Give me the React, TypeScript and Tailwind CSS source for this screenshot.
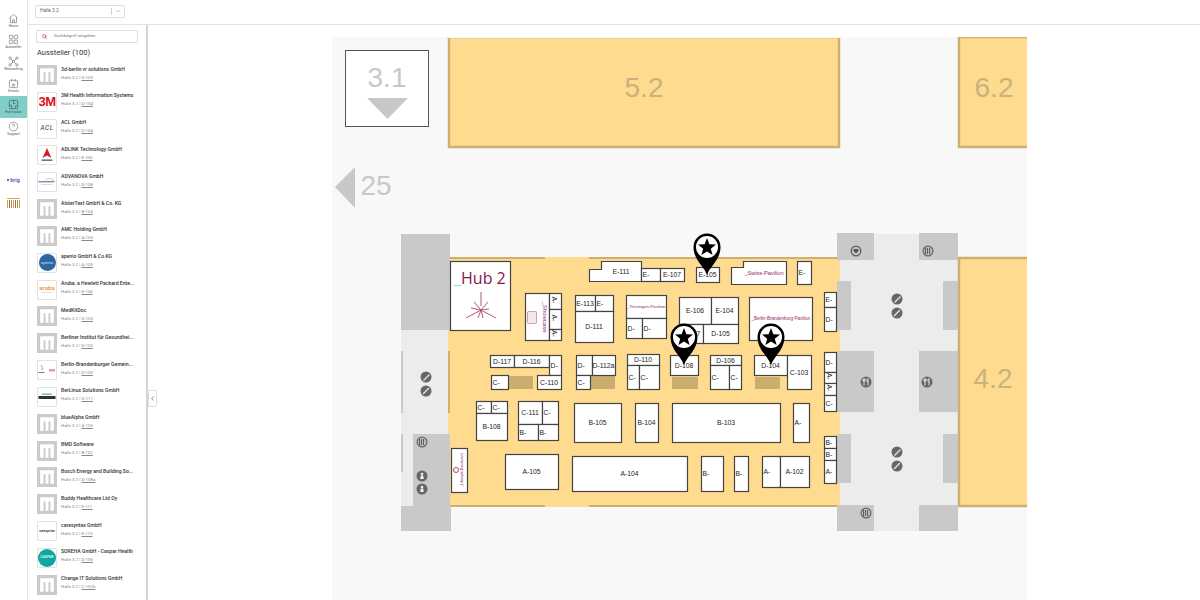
import { ChevronDown, ChevronLeft, Search } from "lucide-react";

const FONT = "font-['Roboto',sans-serif]";

type Exhibitor = { name: string; booth: string; logo?: string };

const exhibitors: Exhibitor[] = [
  { name: "3d-berlin vr solutions GmbH", booth: "D-103" },
  { name: "3M Health Information Systems", booth: "D-104", logo: "3m" },
  { name: "ACL GmbH", booth: "D-104", logo: "acl" },
  { name: "ADLINK Technology GmbH", booth: "E-105", logo: "adlink" },
  { name: "ADVANOVA GmbH", booth: "D-108", logo: "advanova" },
  { name: "AlsterText GmbH & Co. KG", booth: "B-104" },
  { name: "AMC Holding GmbH", booth: "A-105" },
  { name: "apenio GmbH & Co.KG", booth: "A-105", logo: "apenio" },
  { name: "Aruba, a Hewlett Packard Ente...", booth: "E-104", logo: "aruba" },
  { name: "MedKitDoc", booth: "D-103" },
  { name: "Berliner Institut für Gesundhei...", booth: "D-103" },
  { name: "Berlin-Brandenburger Gemein...", booth: "D-103", logo: "bb" },
  { name: "BerLinux Solutions GmbH", booth: "D-111", logo: "berlinux" },
  { name: "blueAlpha GmbH", booth: "A-105" },
  { name: "BMD Software", booth: "B-102" },
  { name: "Bosch Energy and Building So...", booth: "D-108a" },
  { name: "Buddy Healthcare Ltd Oy", booth: "E-111" },
  { name: "caresyntax GmbH", booth: "E-113", logo: "caresyntax" },
  { name: "SOREHA GmbH - Caspar Health", booth: "D-106", logo: "caspar" },
  { name: "Change IT Solutions GmbH", booth: "C-102b" },
];

const Logo = ({ kind }: { kind?: string }) => {
  if (!kind) {
    return (
      <div className="w-[20px] h-[20px] bg-[#cbcbcb] shrink-0 flex items-center justify-center">
        <svg width="16" height="16" viewBox="0 0 14 14">
          <path d="M1 13V1h12v12h-3V4.500H8.300V13H5.700V4.500H4V13z" fill="#fff" />
        </svg>
      </div>
    );
  }
  return (
    <div className="w-[20px] h-[20px] bg-white border border-[#e2e2e2] rounded-[1px] shrink-0 flex items-center justify-center overflow-hidden">
      {kind === "3m" && <span className="text-[#e01010] text-[13px] font-black font-['Liberation_Sans',sans-serif] tracking-[-0.5px]">3M</span>}
      {kind === "acl" && <span className="text-[#333] text-[6.500px] italic tracking-[0.5px]">ACL</span>}
      {kind === "adlink" && (
        <svg width="14" height="16" viewBox="0 0 14 16">
          <path d="M7 1l4.500 10-4.500-2.500L2.500 11z" fill="#d32027" />
          <rect x="1.500" y="12.500" width="11" height="1.300" fill="#555" />
        </svg>
      )}
      {kind === "advanova" && (
        <svg width="18" height="10" viewBox="0 0 18 10">
          <path d="M7 3c3-2.500 7-2 9 1" fill="none" stroke="#f0a860" strokeWidth="0.700" />
          <rect x="0.500" y="4" width="16" height="1.400" fill="#6f8fc0" />
          <rect x="3" y="7" width="11" height="0.700" fill="#ccc" />
        </svg>
      )}
      {kind === "apenio" && (
        <div className="w-[17px] h-[17px] rounded-full bg-[#2b68a0] flex items-center justify-center text-[#cfe0f0] text-[4px]">apenio</div>
      )}
      {kind === "aruba" && (
        <div className="flex flex-col items-center leading-none">
          <span className="text-[#f08a1d] text-[6px] font-medium">aruba</span>
          <span className="text-[#bbb] text-[2.500px] mt-[1px]">enterprise</span>
        </div>
      )}
      {kind === "bb" && (
        <svg width="18" height="12" viewBox="0 0 18 12">
          <path d="M3 1l2 4-2 1" fill="none" stroke="#c64a5a" strokeWidth="0.600" />
          <rect x="0.500" y="8" width="6" height="1" fill="#777" />
          <rect x="11" y="5" width="6" height="2.500" fill="#d8a0a8" />
        </svg>
      )}
      {kind === "berlinux" && (
        <svg width="18" height="8" viewBox="0 0 18 8">
          <rect x="4" y="0.500" width="10" height="1.400" fill="#6fb5b5" />
          <rect x="0.500" y="3" width="17" height="3" fill="#333" />
        </svg>
      )}
      {kind === "caresyntax" && <span className="text-[#222] text-[3.200px] font-medium">caresyntax</span>}
      {kind === "caspar" && (
        <div className="w-[18px] h-[18px] rounded-full bg-[#0ea8a0] flex items-center justify-center text-white text-[3.400px] font-medium">CASPAR</div>
      )}
    </div>
  );
};

const iconProps = { width: 11, height: 11, viewBox: "0 0 24 24", fill: "none", stroke: "#777", strokeWidth: 1.500 };

const navItems = [
  {
    label: "Home",
    icon: (
      <svg {...iconProps}>
        <path d="M3 11l9-8 9 8M5.500 9v12h13V9M10 21v-6h4v6" />
      </svg>
    ),
  },
  {
    label: "Aussteller",
    icon: (
      <svg {...iconProps}>
        <rect x="3" y="3" width="7.500" height="7.500" rx="1.500" />
        <rect x="13.500" y="3" width="7.500" height="7.500" rx="1.500" />
        <rect x="3" y="13.500" width="7.500" height="7.500" rx="1.500" />
        <rect x="13.500" y="13.500" width="7.500" height="7.500" rx="1.500" />
      </svg>
    ),
  },
  {
    label: "Networking",
    icon: (
      <svg {...iconProps}>
        <circle cx="4.500" cy="4.500" r="2.500" />
        <circle cx="19.500" cy="4.500" r="2.500" />
        <circle cx="4.500" cy="19.500" r="2.500" />
        <circle cx="19.500" cy="19.500" r="2.500" />
        <path d="M6.500 6.500l3 3M17.500 6.500l-3 3M6.500 17.500l3-3M17.500 17.500l-3-3" />
        <rect x="9.500" y="9.500" width="5" height="5" />
      </svg>
    ),
  },
  {
    label: "Events",
    icon: (
      <svg {...iconProps}>
        <rect x="3" y="5" width="18" height="16" rx="2" />
        <path d="M8 2.500v5M16 2.500v5M3 10h2M19 10h2M12 12l1 2 2 .3-1.500 1.500.4 2.200-1.900-1-1.900 1 .4-2.200L9 14.300l2-.3z" />
      </svg>
    ),
  },
  {
    label: "Hallenplan",
    active: true,
    icon: (
      <svg {...iconProps} stroke="#3f5f60">
        <rect x="3" y="3" width="18" height="18" rx="2" />
        <path d="M3 14h5v7M12 3v7h4M16 21v-6h5" />
      </svg>
    ),
  },
  {
    label: "Support",
    icon: (
      <svg {...iconProps}>
        <circle cx="12" cy="12" r="9.500" />
        <path d="M9.500 9.500a2.500 2.500 0 1 1 3.500 2.300c-.7.3-1 .8-1 1.700M12 16.500v.5" />
      </svg>
    ),
  },
];

const stripes = ["#e0a030", "#d06040", "#6aa0a0", "#e0a030", "#d06040", "#88a050", "#e0a030"];

const Sidebar = () => (
  <nav className="w-[28px] shrink-0 flex flex-col items-center border-r border-[#e4e4e4] pt-[10px]">
    {navItems.map((item) => (
      <div
        key={item.label}
        className={`w-full h-[21.600px] flex flex-col items-center justify-center ${item.active ? "bg-[#7fcfc9]" : ""}`}
      >
        {item.icon}
        <span className="text-[3.600px] leading-[5px] text-[#555]">{item.label}</span>
      </div>
    ))}
    <div className="mt-[37px] h-[7px] flex items-center text-[5.500px] font-medium">
      <span className="w-[2px] h-[2px] rounded-full bg-[#2a3fa0] mr-[1px]" />
      <span className="text-[#3a4aa0]">brig</span>
    </div>
    <div className="mt-[14px] w-[13px] h-[10px] flex flex-col gap-[1px]">
      <span className="h-[1.500px] bg-[#c9a870]" />
      <div className="flex-1 flex justify-between">
        {stripes.map((c, i) => (
          <span key={i} className="w-[1.400px] h-full" style={{ backgroundColor: c }} />
        ))}
      </div>
    </div>
  </nav>
);

const ExhibitorList = () => (
  <aside className="relative w-[120px] shrink-0 border-r-2 border-[#d4d4d4] pl-[8px] pt-[5px]">
    <div className="w-[102px] h-[13px] border border-[#dedede] rounded-[1px] flex items-center pl-[5px] gap-[7px]">
      <Search size={5} className="text-[#b03060]" strokeWidth={3} />
      <span className="text-[4.400px] text-[#777]">Suchbegriff eingeben</span>
    </div>
    <h2 className="mt-[5px] ml-[1px] text-[7.500px] leading-[10px] text-[#333]">Aussteller (100)</h2>
    <ul className="mt-[7px] ml-[1px] flex flex-col gap-[6.840px]">
      {exhibitors.map((ex) => (
        <li key={ex.name} className="flex gap-[4px] h-[20px]">
          <Logo kind={ex.logo} />
          <div className="pt-[0.500px]">
            <p className="text-[5.100px] leading-[7px] font-medium text-[#333] whitespace-nowrap">{ex.name}</p>
            <p className="mt-[2px] text-[4.400px] leading-[6px] text-[#888] whitespace-nowrap">
              Halle 3.2 | <span className="underline">{ex.booth}</span>
            </p>
          </div>
        </li>
      ))}
    </ul>
  </aside>
);

type Booth = { x: number; y: number; x2: number; y2: number; t?: string; r?: boolean };

const booths: Booth[] = [
  { x: 525, y: 293, x2: 549, y2: 340 },
  { x: 549, y: 293, x2: 561, y2: 309, t: "A-", r: true },
  { x: 549, y: 309, x2: 561, y2: 329, t: "A-", r: true },
  { x: 549, y: 329, x2: 561, y2: 340, t: "A-", r: true },
  { x: 575, y: 295, x2: 595, y2: 311, t: "E-113" },
  { x: 595, y: 295, x2: 613, y2: 311, t: "E-" },
  { x: 575, y: 311, x2: 613, y2: 342, t: "D-111" },
  { x: 641, y: 268, x2: 660, y2: 281, t: "E-" },
  { x: 660, y: 268, x2: 684, y2: 281, t: "E-107" },
  { x: 626, y: 295, x2: 666, y2: 318 },
  { x: 626, y: 318, x2: 642, y2: 338, t: "D-" },
  { x: 642, y: 318, x2: 666, y2: 338, t: "D-" },
  { x: 696, y: 267, x2: 719, y2: 282, t: "E-105" },
  { x: 797, y: 261, x2: 811, y2: 284, t: "E-" },
  { x: 679, y: 297, x2: 711, y2: 324, t: "E-106" },
  { x: 711, y: 297, x2: 738, y2: 324, t: "E-104" },
  { x: 679, y: 324, x2: 703, y2: 343, t: "D-107" },
  { x: 703, y: 324, x2: 738, y2: 343, t: "D-105" },
  { x: 749, y: 297, x2: 812, y2: 340 },
  { x: 824, y: 292, x2: 836, y2: 307, t: "E-" },
  { x: 824, y: 307, x2: 836, y2: 331, t: "D-" },
  { x: 627, y: 354, x2: 659, y2: 365, t: "D-110" },
  { x: 627, y: 365, x2: 639, y2: 389, t: "C-" },
  { x: 639, y: 365, x2: 659, y2: 389, t: "C-" },
  { x: 670, y: 355, x2: 698, y2: 375, t: "D-108" },
  { x: 710, y: 355, x2: 741, y2: 365, t: "D-106" },
  { x: 710, y: 365, x2: 729, y2: 389, t: "C-" },
  { x: 729, y: 365, x2: 741, y2: 389, t: "C-" },
  { x: 754, y: 355, x2: 787, y2: 375, t: "D-104" },
  { x: 787, y: 355, x2: 811, y2: 389, t: "C-103" },
  { x: 824, y: 352, x2: 836, y2: 372, t: "D-" },
  { x: 824, y: 372, x2: 836, y2: 383, t: "A-", r: true },
  { x: 824, y: 383, x2: 836, y2: 395, t: "A-", r: true },
  { x: 824, y: 395, x2: 836, y2: 411, t: "C-" },
  { x: 490, y: 355, x2: 514, y2: 367, t: "D-117" },
  { x: 514, y: 355, x2: 549, y2: 367, t: "D-116" },
  { x: 549, y: 355, x2: 561, y2: 375, t: "D-" },
  { x: 491, y: 375, x2: 508, y2: 389, t: "C-" },
  { x: 537, y: 375, x2: 561, y2: 389, t: "C-110" },
  { x: 576, y: 355, x2: 592, y2: 375, t: "D-" },
  { x: 592, y: 355, x2: 615, y2: 375, t: "D-112a" },
  { x: 576, y: 375, x2: 590, y2: 389, t: "C-" },
  { x: 476, y: 401, x2: 491, y2: 413, t: "C-" },
  { x: 491, y: 401, x2: 507, y2: 413, t: "C-" },
  { x: 476, y: 413, x2: 507, y2: 440, t: "B-108" },
  { x: 518, y: 401, x2: 542, y2: 424, t: "C-111" },
  { x: 542, y: 401, x2: 558, y2: 424, t: "C-" },
  { x: 518, y: 424, x2: 538, y2: 440, t: "B-" },
  { x: 538, y: 424, x2: 558, y2: 440, t: "B-" },
  { x: 574, y: 403, x2: 621, y2: 442, t: "B-105" },
  { x: 635, y: 403, x2: 658, y2: 442, t: "B-104" },
  { x: 672, y: 403, x2: 780, y2: 442, t: "B-103" },
  { x: 793, y: 403, x2: 809, y2: 442, t: "A-" },
  { x: 505, y: 454, x2: 558, y2: 489, t: "A-105" },
  { x: 572, y: 456, x2: 687, y2: 491, t: "A-104" },
  { x: 701, y: 456, x2: 723, y2: 491, t: "B-" },
  { x: 734, y: 456, x2: 748, y2: 491, t: "B-" },
  { x: 762, y: 456, x2: 780, y2: 487, t: "A-" },
  { x: 780, y: 456, x2: 809, y2: 487, t: "A-102" },
  { x: 824, y: 436, x2: 836, y2: 448, t: "B-" },
  { x: 824, y: 448, x2: 836, y2: 460, t: "B-" },
  { x: 824, y: 460, x2: 836, y2: 483, t: "A-" },
  { x: 451, y: 448, x2: 467, y2: 492 },
];

const greyBlocks = [
  [401, 234, 450, 330],
  [413, 434, 450, 506],
  [401, 506, 451, 531],
  [837, 233, 874, 260],
  [919, 233, 958, 260],
  [837, 281, 851, 330],
  [943, 281, 958, 330],
  [837, 351, 874, 412],
  [919, 351, 958, 412],
  [837, 434, 851, 483],
  [943, 434, 958, 483],
  [837, 505, 874, 531],
  [919, 505, 958, 531],
  [401, 351, 403, 413],
  [401, 434, 403, 472],
];

const brownBlocks = [
  [509, 376, 533, 389],
  [591, 376, 615, 389],
  [672, 377, 698, 389],
  [755, 377, 780, 389],
];

type Poi = { x: number; y: number; kind: "stairs" | "lift" | "wc" | "heart" | "food" | "person" };

const pois: Poi[] = [
  { x: 426, y: 377, kind: "stairs" },
  { x: 426, y: 391, kind: "lift" },
  { x: 422, y: 442, kind: "wc" },
  { x: 422, y: 476, kind: "person" },
  { x: 422, y: 489, kind: "person" },
  { x: 856, y: 251, kind: "heart" },
  { x: 928, y: 251, kind: "wc" },
  { x: 897, y: 299, kind: "stairs" },
  { x: 897, y: 313, kind: "lift" },
  { x: 866, y: 382, kind: "food" },
  { x: 927, y: 382, kind: "food" },
  { x: 897, y: 452, kind: "stairs" },
  { x: 897, y: 466, kind: "lift" },
  { x: 866, y: 513, kind: "wc" },
];

const PoiIcon = ({ x, y, kind }: Poi) => (
  <g>
    <circle cx={x} cy={y} r="5.500" fill="#666" />
    {kind === "stairs" && (
      <path d={`M${x - 3} ${y + 3}h2v-2h2v-2h2v-2`} fill="none" stroke="#eee" strokeWidth="1" />
    )}
    {kind === "lift" && (
      <path d={`M${x - 3} ${y + 3}l6-6M${x - 2.500} ${y - 1}h.1M${x + 2} ${y + 2}h.1`} stroke="#eee" strokeWidth="1.200" />
    )}
    {kind === "wc" && (
      <>
        <circle cx={x} cy={y} r="4.300" fill="#bbb" />
        <path d={`M${x - 2.500} ${y - 3}v6M${x - 0.500} ${y - 3}v6M${x + 1.500} ${y - 3}v6`} stroke="#444" strokeWidth="0.800" />
      </>
    )}
    {kind === "heart" && (
      <>
        <circle cx={x} cy={y} r="4" fill="#ccc" />
        <path d={`M${x} ${y + 2.500}l-2.500-2.500a1.400 1.400 0 0 1 2.500-1.500a1.400 1.400 0 0 1 2.500 1.500z`} fill="#555" />
      </>
    )}
    {kind === "food" && (
      <path d={`M${x - 2} ${y - 3.500}v7M${x - 3} ${y - 3.500}v2.500h2v-2.500M${x + 2} ${y + 3.500}v-7c-1.500 1-1.500 3 0 4`} fill="none" stroke="#eee" strokeWidth="0.900" />
    )}
    {kind === "person" && (
      <>
        <circle cx={x} cy={y - 2} r="1.300" fill="#eee" />
        <path d={`M${x - 1.800} ${y + 3}l.6-3.500h2.400l.6 3.500z`} fill="#eee" />
      </>
    )}
  </g>
);

const Pin = ({ x, y }: { x: number; y: number }) => (
  <g>
    <path
      d={`M${x} ${y}C${x - 3} ${y - 9} ${x - 13.500} ${y - 15} ${x - 13.500} ${y - 28}a13.500 13.500 0 0 1 27 0C${x + 13.500} ${y - 15} ${x + 3} ${y - 9} ${x} ${y}z`}
      fill="#000"
    />
    <circle cx={x} cy={y - 28} r="11" fill="#fff" />
    <path
      d={`M${x} ${y - 37}l2.400 6.200 6.600.3-5.200 4.200 1.800 6.400-5.600-3.700-5.600 3.700 1.800-6.400-5.200-4.200 6.600-.3z`}
      fill="#000"
    />
  </g>
);

const FloorPlan = () => (
  <svg width="695" height="563" viewBox="332 37 695 563" className="block font-['Liberation_Sans',sans-serif]">
    <rect x="332" y="37" width="695" height="563" fill="#f8f8f8" />

    {/* neighbouring halls */}
    <rect x="449" y="37" width="390" height="110" fill="#fedb8e" stroke="#cdb06f" strokeWidth="2.500" />
    <rect x="448" y="35" width="394" height="3" fill="#f8f8f8" />
    <text x="644" y="97" fontSize="28" fill="#c9b27c" textAnchor="middle">5.2</text>
    <rect x="959" y="37" width="70" height="110" fill="#fedb8e" stroke="#cdb06f" strokeWidth="2.500" />
    <text x="994" y="97" fontSize="28" fill="#c9b27c" textAnchor="middle">6.2</text>
    <rect x="345.500" y="50.500" width="83" height="76" fill="#fff" stroke="#555" />
    <text x="387" y="87" fontSize="28" fill="#c8c8c8" textAnchor="middle">3.1</text>
    <path d="M367 98h41l-20.500 21z" fill="#c8c8c8" />
    <path d="M335 187l20-20v41z" fill="#c8c8c8" />
    <text x="376" y="195" fontSize="28" fill="#c8c8c8" textAnchor="middle">25</text>

    {/* corridors */}
    <rect x="401" y="330" width="48" height="201" fill="#ececec" />
    <rect x="838" y="234" width="120" height="297" fill="#ececec" />
    <rect x="959" y="258" width="70" height="248" fill="#fedb8e" stroke="#cdb06f" strokeWidth="2.500" />
    <text x="993" y="388" fontSize="28" fill="#c9b27c" textAnchor="middle">4.2</text>

    {/* main hall */}
    <rect x="448" y="257" width="392" height="250" fill="#fedb8e" />
    <path d="M448 258h97M589 258h251M448 506h97M589 506h251M449 351v62M449 434v72" stroke="#cdb06f" strokeWidth="2" />
    {greyBlocks.map(([x, y, x2, y2]) => (
      <rect key={`${x}-${y}`} x={x} y={y} width={x2 - x} height={y2 - y} fill="#c9c9c9" />
    ))}
    {brownBlocks.map(([x, y, x2, y2]) => (
      <rect key={x} x={x} y={y} width={x2 - x} height={y2 - y} fill="#c9ae70" />
    ))}

    {/* booths with a notched outline */}
    <path d="M589.500 269.500h12v-8h40v20h-52z" fill="#fff" stroke="#444" strokeWidth="1.200" />
    <text x="621" y="273.500" fontSize="6.800" fill="#222" textAnchor="middle">E-111</text>
    <path d="M731.500 267.500h12v-6h43v23h-55z" fill="#fff" stroke="#444" strokeWidth="1.200" />
    <text x="764" y="275" fontSize="5.600" fill="#92295f" textAnchor="middle">_Swiss-Pavilion</text>

    {booths.map((b) => {
      const plain = !!b.t && b.t.endsWith("-");
      return (
        <g key={`${b.x}-${b.y}`}>
          <rect x={b.x + 0.5} y={b.y + 0.5} width={b.x2 - b.x} height={b.y2 - b.y} fill="#fff" stroke="#444" strokeWidth="1.200" />
          {b.t && (
            <text
              x={plain ? b.x + 1.5 : (b.x + b.x2) / 2}
              y={(b.y + b.y2) / 2 + 2.800}
              fontSize="6.800"
              fill="#222"
              textAnchor={plain ? "start" : "middle"}
              transform={b.r ? `rotate(90 ${b.x + 6} ${(b.y + b.y2) / 2})` : undefined}
            >
              {b.t}
            </text>
          )}
        </g>
      );
    })}

    {/* Hub 2 */}
    <rect x="450.500" y="261.500" width="60" height="69" fill="#fff" stroke="#444" strokeWidth="1.200" />
    <text x="454" y="284" fontSize="16" fontFamily="Open Sans" fill="#86174f">
      <tspan fill="#8fdcd6">_</tspan>Hub 2
    </text>
    <path
      d="M481 292v14M481 310l-15 8M481 310l15 8M481 310l7-8M481 310l-7-8M481 310l-10-2M481 310l8-1M481 310l-3 8M481 310l2 8"
      stroke="#a8466f"
      strokeWidth="0.900"
    />

    {/* pavilion labels */}
    <text x="646" y="308" fontSize="4.400" fill="#92295f" textAnchor="middle">_Thüringen-Pavilion</text>
    <text x="781" y="319.500" fontSize="4.500" fill="#92295f" textAnchor="middle">_Berlin-Brandenburg-Pavilion</text>
    <text x="0" y="0" fontSize="6" fill="#92295f" textAnchor="middle" transform="translate(543 317) rotate(90)">_Showcase</text>
    <rect x="527.500" y="311.500" width="9" height="12" rx="1" fill="#f5e6ec" stroke="#c489a5" strokeWidth="0.800" />
    <text x="0" y="0" fontSize="3.800" fill="#92295f" textAnchor="middle" transform="translate(463 470) rotate(-90)">_Lifestyle-Boulevard</text>
    <circle cx="456" cy="470" r="2.500" fill="none" stroke="#a8466f" />

    {/* service icons */}
    {pois.map((p) => (
      <PoiIcon key={`${p.x}-${p.y}`} {...p} />
    ))}

    <Pin x={707} y={275} />
    <Pin x={684} y={365} />
    <Pin x={771} y={365} />
  </svg>
);

export default function App() {
  return (
    <div className={`flex w-[1200px] h-[600px] overflow-hidden bg-white ${FONT}`}>
      <Sidebar />
      <div className="flex-1 flex flex-col min-w-0">
        <header className="h-[25px] shrink-0 border-b border-[#e2e2e2] flex items-center pl-[7px] pb-[2px]">
          <div className="w-[90px] h-[13px] border border-[#dcdcdc] rounded-[2px] flex items-center justify-between pl-[4px] pr-[2px]">
            <span className="text-[4.800px] text-[#666]">Halle 3.2</span>
            <div className="flex items-center gap-[2px]">
              <span className="w-px h-[7px] bg-[#cfcfcf]" />
              <ChevronDown size={8} className="text-[#999]" strokeWidth={1.500} />
            </div>
          </div>
        </header>
        <div className="flex-1 flex min-h-0">
          <ExhibitorList />
          <main className="relative flex-1 pl-[184px] pt-[12px]">
            <button className="absolute left-0 top-[365px] w-[9px] h-[17px] bg-white border border-[#e0e0e0] rounded-r-[2px] flex items-center justify-center">
              <ChevronLeft size={7} className="text-[#555]" strokeWidth={2.500} />
            </button>
            <FloorPlan />
          </main>
        </div>
      </div>
    </div>
  );
}
